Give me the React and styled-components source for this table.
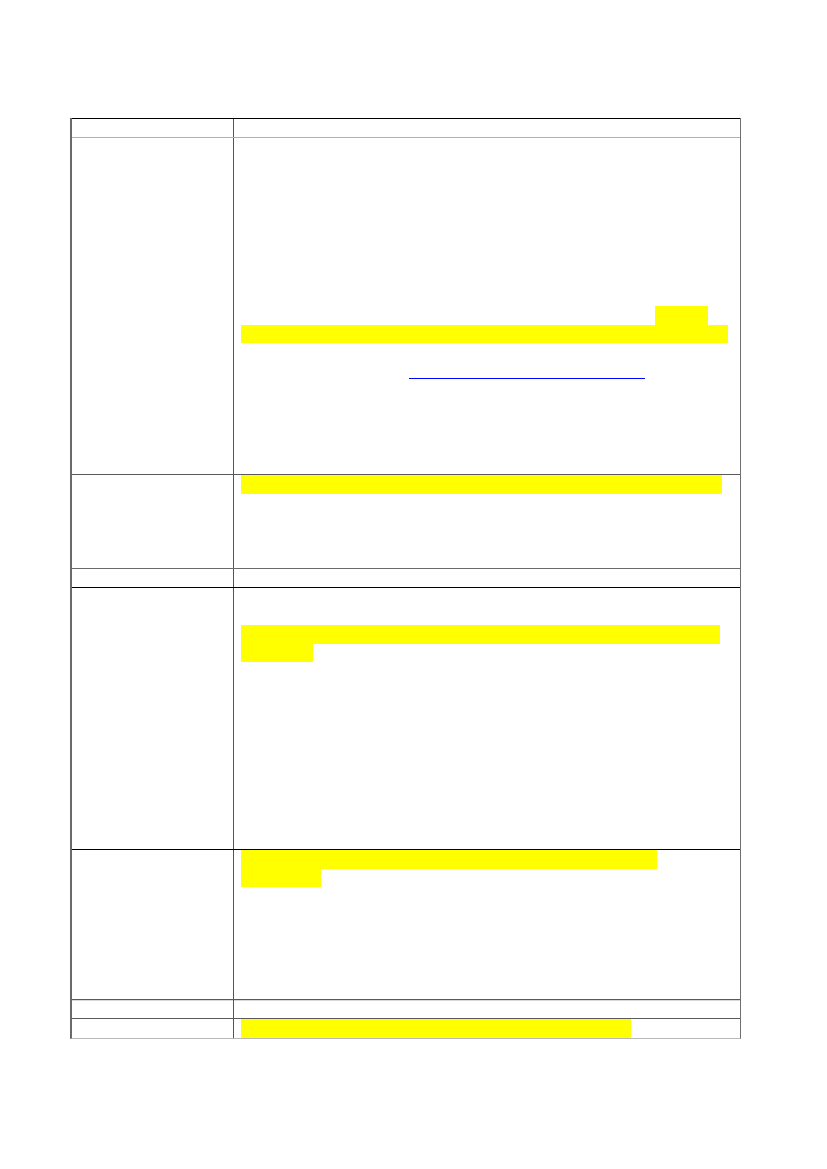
import React from "react";
import styled, { createGlobalStyle } from "styled-components";

const Global = createGlobalStyle`
  html, body { margin: 0; padding: 0; background: #ffffff; }
  body { font-family: "Liberation Sans", Arial, sans-serif; font-size: 14.5px; }
`;

const Page = styled.div`
  width: 827px;
  min-height: 1169px;
  padding-top: 118px;
  padding-left: 70px;
  box-sizing: border-box;
`;

const Table = styled.div`
  width: 671px;
  box-sizing: border-box;
  border-left: 2px solid #6a6a6a;
  border-right: 1px solid #6f6f6f;
  border-bottom: 1px solid #b8b8b8;
  display: flex;
  flex-direction: column;
`;

const Row = styled.div`
  display: grid;
  grid-template-columns: 162px 1fr;
  height: ${(p) => p.$h}px;
  box-sizing: border-box;
  border-top: 1px solid ${(p) => p.$line || "#5a5a5a"};
  box-shadow: ${(p) => (p.$soft ? "inset 0 1px 0 #d8d8d8" : "none")};
`;

const LabelCell = styled.div`
  border-right: 1px solid #555555;
  box-sizing: border-box;
`;

const ContentCell = styled.div`
  padding-left: 7px;
  box-sizing: border-box;
  line-height: 18.4px;
`;

const Para = styled.div`
  margin-top: ${(p) => p.$mt || 0}px;
`;

const Mark = styled.span`
  display: block;
  height: 18.5px;
  width: ${(p) => p.$w}px;
  margin-left: ${(p) => p.$ml || 0}px;
  background: #ffff00;
  color: transparent;
  overflow: hidden;
  white-space: nowrap;
`;

const LinkLine = styled.a`
  display: block;
  width: ${(p) => p.$w}px;
  margin-left: ${(p) => p.$ml}px;
  height: 14px;
  border-bottom: 1.5px solid #0000ff;
  color: transparent;
  overflow: hidden;
  text-decoration: none;
`;

export default function App() {
  return (
    <>
      <Global />
      <Page>
        <Table>
          <Row $h={19} $line="#000000">
            <LabelCell />
            <ContentCell />
          </Row>
          <Row $h={337} $line="#b0b0b0">
            <LabelCell />
            <ContentCell>
              <Para $mt={168}>
                <Mark $w={53} $ml={414} />
                <Mark $w={487} />
              </Para>
              <Para $mt={21}>
                <LinkLine $w={236} $ml={168} href="#" />
              </Para>
            </ContentCell>
          </Row>
          <Row $h={94}>
            <LabelCell />
            <ContentCell>
              <Mark $w={481} />
            </ContentCell>
          </Row>
          <Row $h={19} $line="#6a6a6a">
            <LabelCell />
            <ContentCell />
          </Row>
          <Row $h={262} $line="#000000">
            <LabelCell />
            <ContentCell>
              <Para $mt={37}>
                <Mark $w={479} />
                <Mark $w={72} />
              </Para>
            </ContentCell>
          </Row>
          <Row $h={150} $line="#000000">
            <LabelCell />
            <ContentCell>
              <Mark $w={416} />
              <Mark $w={80} />
            </ContentCell>
          </Row>
          <Row $h={19} $soft>
            <LabelCell />
            <ContentCell />
          </Row>
          <Row $h={20}>
            <LabelCell />
            <ContentCell>
              <Mark $w={390} />
            </ContentCell>
          </Row>
        </Table>
      </Page>
    </>
  );
}
